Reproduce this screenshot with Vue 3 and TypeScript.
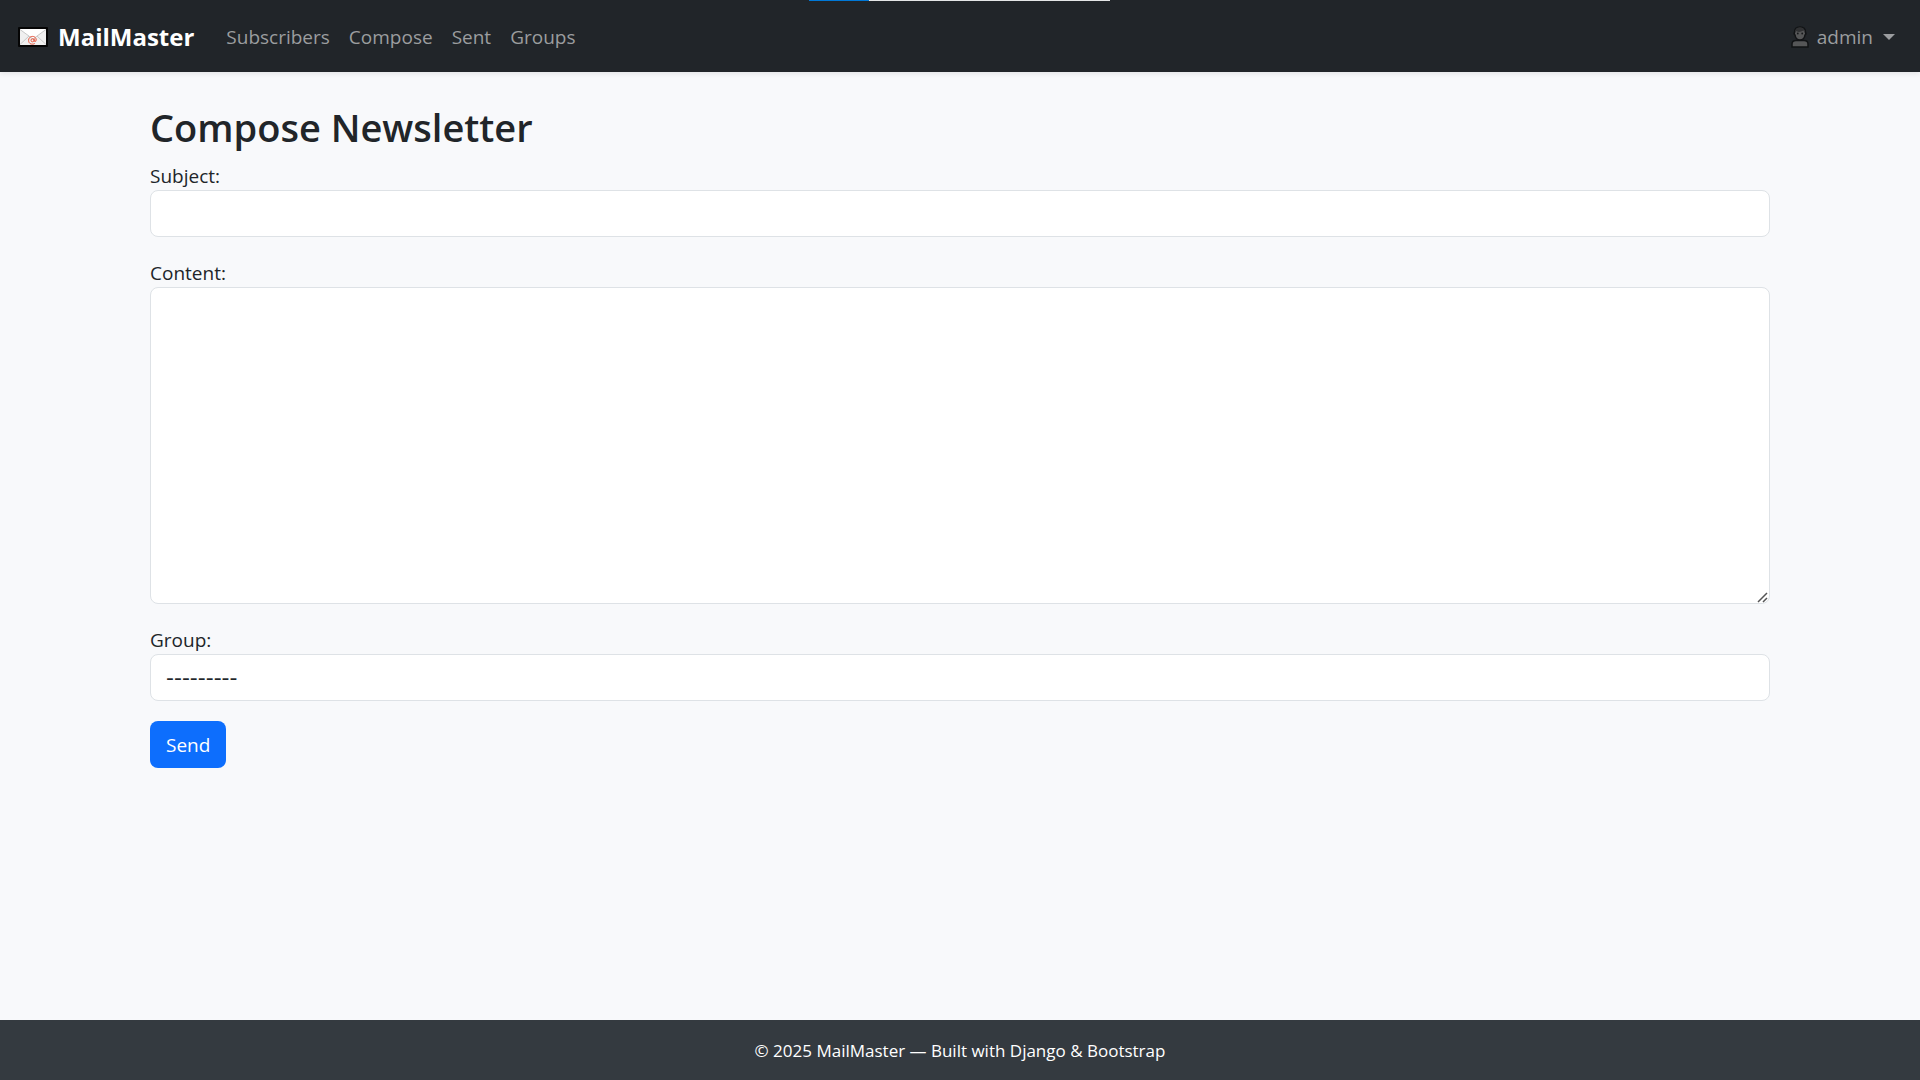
<script setup lang="ts">
import { ref } from 'vue'

interface NavItem {
  label: string
  href: string
}

const navItems: NavItem[] = [
  { label: 'Subscribers', href: '#subscribers' },
  { label: 'Compose', href: '#compose' },
  { label: 'Sent', href: '#sent' },
  { label: 'Groups', href: '#groups' },
]

const subject = ref('')
const content = ref('')
const group = ref('')
</script>

<template>
  <div class="page">
    <div class="progress" aria-hidden="true"><span class="progress-done"></span></div>
    <nav class="navbar">
      <a class="brand" href="#home">
        <svg class="mail-icon" viewBox="0 0 30 20" aria-hidden="true">
          <rect width="30" height="20" rx="1" fill="#050505" />
          <rect x="2" y="2" width="26" height="16" fill="#f0f0f0" />
          <path d="M2 2h26L15 12z" fill="#fff" />
          <path d="M2 2.500l13 9.500L28 2.500M2 17.500L11 9M28 17.500L19 9" fill="none" stroke="#c9c9c9" />
          <circle cx="14.500" cy="13.300" r="1.500" fill="none" stroke="#e8553c" stroke-width="1" />
          <path d="M16.200 11.500v2.700q1.900 1 2-1.200c0-5-7.600-4.700-7.600.3 0 4.100 3.900 4.500 6.200 3.200" fill="none" stroke="#e8553c" stroke-width="1" />
        </svg>
        <span>MailMaster</span>
      </a>
      <ul class="nav-list">
        <li v-for="item in navItems" :key="item.label">
          <a class="nav-link" :href="item.href">{{ item.label }}</a>
        </li>
      </ul>
      <button class="user-menu" type="button" aria-haspopup="true">
        <svg class="user-icon" viewBox="0 0 18 22" aria-hidden="true">
          <path d="M1 21v-3q0-3.500 4-3.500h8q4 0 4 3.500v3z" fill="#555657" stroke="#111315" stroke-width="1.500" />
          <path d="M9 1C5 1 3.500 3.500 3.500 6.500q-1 1.500.5 2.500.8 5 5 5t5-5q1.500-1 .5-2.500C14.500 3 13 1 9 1z" fill="#555657" stroke="#111315" stroke-width="1.500" />
          <path d="M4 6.500C4 2.500 6 1.500 9 1.500s5 1.500 5 5L12.500 4.500Q8 7 5.500 5z" fill="#303133" />
          <circle cx="6.800" cy="7.500" r=".9" fill="#17191b" />
          <circle cx="11.200" cy="7.500" r=".9" fill="#17191b" />
        </svg>
        <span>admin</span>
        <span class="caret"></span>
      </button>
    </nav>

    <main class="container">
      <h2 class="title">Compose Newsletter</h2>
      <form @submit.prevent>
        <div class="field">
          <label for="subject">Subject:</label>
          <input id="subject" v-model="subject" class="control" type="text" />
        </div>
        <div class="field">
          <label for="content">Content:</label>
          <textarea id="content" v-model="content" class="control area"></textarea>
        </div>
        <div class="field">
          <label for="group">Group:</label>
          <select id="group" v-model="group" class="control choice">
            <option value="">---------</option>
          </select>
        </div>
        <button class="send" type="submit">Send</button>
      </form>
    </main>

    <footer class="footer">© 2025 MailMaster — Built with Django &amp; Bootstrap</footer>
  </div>
</template>

<style>
body {
  margin: 0;
}
</style>

<style scoped>
.page {
  display: flex;
  flex-direction: column;
  min-height: 100vh;
  background: #f8f9fb;
  color: #212529;
  font-family: "Segoe UI", "Open Sans", "Noto Sans", sans-serif;
  font-size: 19px;
  line-height: 30px;
}
.page *,
.page {
  box-sizing: border-box;
}
.progress {
  position: absolute;
  top: 0;
  left: 50%;
  width: 301px;
  height: 1px;
  margin-left: -151px;
  background: #e4e6e6;
}
.progress-done {
  display: block;
  width: 20%;
  height: 1px;
  background: #0078d7;
}
.navbar {
  display: flex;
  align-items: center;
  height: 72px;
  padding: 2px 25px 0 18px;
  background: #212529;
  box-shadow: 0 2px 5px rgba(0, 0, 0, 0.08);
}
.brand {
  display: flex;
  align-items: center;
  gap: 10px;
  margin-right: 32px;
  color: #fff;
  font-size: 24px;
  font-weight: 700;
  text-decoration: none;
}
.mail-icon {
  width: 30px;
  height: 20px;
}
.nav-list {
  display: flex;
  gap: 19px;
  margin: 0;
  padding: 0;
  list-style: none;
}
.nav-link {
  color: #9b9d9f;
  text-decoration: none;
}
.user-menu {
  display: flex;
  align-items: center;
  margin-left: auto;
  padding: 0;
  border: 0;
  background: none;
  color: #9b9d9f;
  font: inherit;
}
.user-icon {
  width: 18px;
  height: 22px;
  margin-right: 8px;
}
.caret {
  margin-left: 10px;
  border: 6px solid transparent;
  border-top-color: currentColor;
  border-bottom: 0;
}
.container {
  flex: 1;
  width: 100%;
  max-width: 1650px;
  margin: 0 auto;
  padding: 31px 15px;
}
.title {
  margin: 0 0 9px;
  font-size: 38px;
  font-weight: 600;
  line-height: 48px;
}
.field {
  display: flex;
  flex-direction: column;
  margin-bottom: 20px;
}
.field label {
  padding-top: 2px;
  line-height: 28px;
}
.control {
  width: 100%;
  height: 47px;
  margin: 0;
  padding: 8px 15px;
  border: 1px solid #dee2e6;
  border-radius: 8px;
  outline: 0;
  background: #fff;
  color: #212529;
  font: inherit;
  appearance: none;
}
.area {
  height: 317px;
  resize: vertical;
}
.area::-webkit-resizer {
  background: url("data:image/svg+xml,%3Csvg xmlns='http://www.w3.org/2000/svg' width='15' height='15'%3E%3Cpath d='M4 14L13 5M9 14L13 10' stroke='%23555' stroke-width='1.5'/%3E%3C/svg%3E") no-repeat right bottom;
}
.choice {
  font-family: "DejaVu Sans", sans-serif;
  font-size: 22px;
}
.send {
  display: block;
  height: 47px;
  padding: 0 16px;
  border: 0;
  border-radius: 8px;
  background: #0d6efd;
  color: #fff;
  font: inherit;
}
.footer {
  padding: 16px 15px 14px;
  background: #343a40;
  color: #fff;
  font-size: 17px;
  text-align: center;
}
</style>
